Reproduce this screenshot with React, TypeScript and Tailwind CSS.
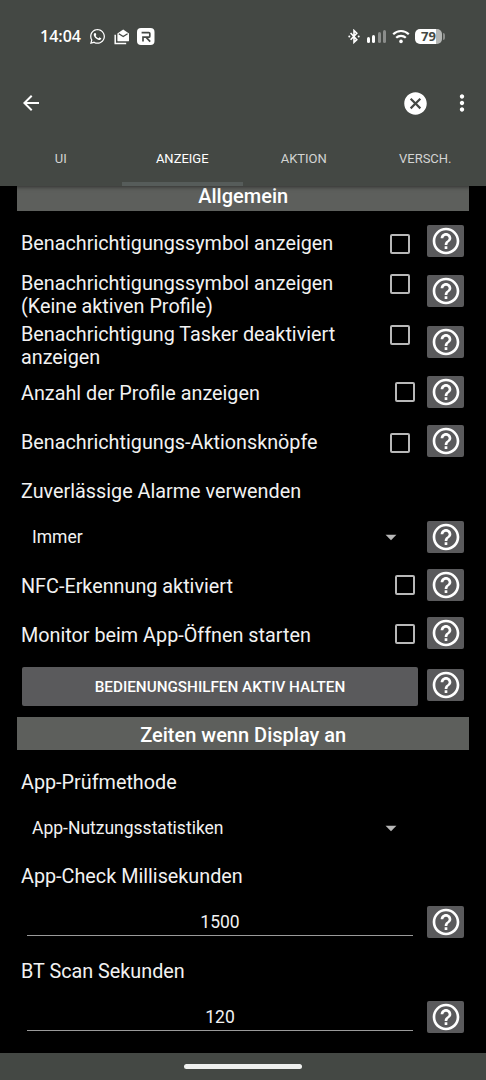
import type { ReactNode } from "react";
import clsx from "clsx";
import {
  MdArrowBack,
  MdArrowDropDown,
  MdCancel,
  MdHelpOutline,
  MdMoreVert,
} from "react-icons/md";
import { FaWhatsapp } from "react-icons/fa";

const tabs = ["UI", "ANZEIGE", "AKTION", "VERSCH."];

const StatusBar = () => {
  return (
    <div className="flex h-[72px] items-center justify-between pr-[41px] pl-10 text-white">
      <div className="flex items-center">
        <span className="w-[49px] font-['Open_Sans',sans-serif] text-[16px] leading-none font-semibold whitespace-nowrap">
          14:04
        </span>
        <FaWhatsapp className="size-[17px]" />
        <svg className="mt-px ml-2 size-4" viewBox="0 0 16 16">
          <path
            d="M1.2 5.8v8.7h11"
            fill="none"
            stroke="currentColor"
            strokeWidth="1.5"
          />
          <path
            d="M3.4 4.6 9.2.6 15 4.6v6.8a.9.9 0 0 1-.9.9H4.3a.9.9 0 0 1-.9-.9z"
            fill="currentColor"
          />
          <path
            d="m4.8 4.8 4.4 2.800 4.400-2.800"
            fill="none"
            stroke="#444844"
            strokeWidth="1.3"
          />
        </svg>
        <svg className="mt-px ml-[7px] size-[18px]" viewBox="0 0 18 18">
          <rect width="17.5" height="17" rx="4" fill="currentColor" />
          <path
            d="M4.6 4.600h7.200a1 1 0 0 1 1 1v2.600a1 1 0 0 1-1 1H6v4.400M9 9.200l4.200 4.400"
            fill="none"
            stroke="#444844"
            strokeWidth="1.7"
          />
        </svg>
      </div>
      <div className="flex items-center">
        <svg className="h-[15px] w-3" viewBox="0 0 12 15">
          <path
            d="m2.6 4 6.200 6.600L6 13.300V1.500l2.800 2.700-6.200 6.600"
            fill="none"
            stroke="currentColor"
            strokeWidth="1.6"
          />
          <circle cx="1.3" cy="7.4" r="1" fill="currentColor" />
          <circle cx="10.7" cy="7.4" r="1" fill="currentColor" />
        </svg>
        <div className="ml-[7px] flex h-[13px] items-end gap-[2.5px]">
          <div className="h-[6px] w-[3px] rounded-full bg-white"></div>
          <div className="h-[8px] w-[3px] rounded-full bg-white"></div>
          <div className="h-[11px] w-[3px] rounded-full bg-[#8b8d8b]"></div>
          <div className="h-[13px] w-[3px] rounded-full bg-[#8b8d8b]"></div>
        </div>
        <svg className="ml-1.5 h-[15px] w-[18px]" viewBox="0 0 18 15">
          <path
            d="M1.2 5.200c4.400-4.300 11.200-4.300 15.600 0M4.200 8.800c2.700-2.700 6.900-2.700 9.600 0"
            fill="none"
            stroke="currentColor"
            strokeWidth="2.2"
          />
          <circle cx="9" cy="12.4" r="1.8" fill="currentColor" />
        </svg>
        <div className="ml-[5px] flex items-center">
          <div className="flex h-[15px] w-[27px] items-center justify-center rounded-[5px] bg-linear-to-r from-white from-78% to-[#b4b6b4] to-78% pt-px font-['Open_Sans',sans-serif] text-[13px] leading-none font-bold text-[#444844]">
            79
          </div>
          <div className="ml-px h-[7px] w-[2px] rounded-r-full bg-[#8b8d8b]"></div>
        </div>
      </div>
    </div>
  );
};

const Header = () => {
  return (
    <header className="relative z-10 h-[186px] bg-[#444844] shadow-[0_1px_4px_rgba(0,0,0,0.5)]">
      <StatusBar />
      <div className="flex h-[62px] items-center pr-[11px] pl-[19px] text-white">
        <MdArrowBack className="size-6" />
        <MdCancel className="mr-[20px] ml-auto size-[27px]" />
        <MdMoreVert className="size-[26px]" />
      </div>
      <nav className="flex h-[52px]">
        {tabs.map((tab) => (
          <div
            key={tab}
            className={clsx(
              "flex flex-1 items-center justify-center border-b-4 pt-[1px] text-[13px]",
              tab === "ANZEIGE"
                ? "border-[#565c5a] text-white"
                : "border-transparent text-[#d3d4d3]",
            )}
          >
            {tab}
          </div>
        ))}
      </nav>
    </header>
  );
};

const Section = ({ children }: { children: ReactNode }) => {
  return (
    <h2 className="mr-[17px] ml-[17.4px] flex h-[33px] items-center justify-center bg-[#5d5f5c] pt-[2px] text-[20px] font-medium text-white">
      {children}
    </h2>
  );
};

const Help = ({ className }: { className: string }) => {
  return (
    <button
      className={clsx(
        "flex h-8 w-[37px] shrink-0 items-center justify-center rounded-[2px] bg-[#5a5a5c] text-white",
        className,
      )}
    >
      <MdHelpOutline className="size-8" />
    </button>
  );
};

const Label = ({
  className,
  children,
}: {
  className: string;
  children: ReactNode;
}) => {
  return (
    <span
      className={clsx(
        "block text-[19.8px] leading-[23px] whitespace-nowrap",
        className,
      )}
    >
      {children}
    </span>
  );
};

const Row = ({
  className,
  children,
}: {
  className: string;
  children: ReactNode;
}) => {
  return (
    <div className={clsx("flex items-start pr-[22px] pl-[21px]", className)}>
      {children}
    </div>
  );
};

const Check = ({ className }: { className: string }) => {
  return (
    <div
      className={clsx(
        "ml-auto size-5 shrink-0 rounded-[2px] border-2 border-[#b8b8b8]",
        className,
      )}
    ></div>
  );
};

const Select = ({ value }: { value: string }) => {
  return (
    <div className="flex h-[43px] w-[383px] items-center justify-between pl-[11px] text-[17.5px]">
      {value}
      <MdArrowDropDown className="mb-px size-[26px] text-[#b8b8b8]" />
    </div>
  );
};

const NumberField = ({ value }: { value: string }) => {
  return (
    <div className="ml-[6px] flex h-9 w-[386px] items-center justify-center border-b-[1.5px] border-[#9a9a9a] pt-[9px] text-[17.5px]">
      {value}
    </div>
  );
};

const App = () => {
  return (
    <div className="flex h-[1080px] w-[486px] flex-col overflow-hidden bg-black font-[Roboto,sans-serif] text-[#f2f2f2]">
      <Header />
      <main className="-mt-2 flex-1">
        <Section>Allgemein</Section>
        <Row className="h-[57px]">
          <Label className="mt-[21px]">Benachrichtigungssymbol anzeigen</Label>
          <Check className="mt-[23px]" />
          <Help className="mt-[14px] ml-[17px]" />
        </Row>
        <Row className="h-[51px]">
          <Label className="mt-[4px]">
            Benachrichtigungssymbol anzeigen
            <br />
            (Keine aktiven Profile)
          </Label>
          <Check className="mt-[6px]" />
          <Help className="mt-[7px] ml-[17px]" />
        </Row>
        <Row className="h-[51px]">
          <Label className="mt-[4px]">
            Benachrichtigung Tasker deaktiviert
            <br />
            anzeigen
          </Label>
          <Check className="mt-[6px]" />
          <Help className="mt-[7px] ml-[17px]" />
        </Row>
        <Row className="h-[49px]">
          <Label className="mt-[12px]">Anzahl der Profile anzeigen</Label>
          <Check className="mt-[12px]" />
          <Help className="mt-[6px] ml-[12px]" />
        </Row>
        <Row className="h-[49px]">
          <Label className="mt-[12px]">Benachrichtigungs-Aktionsknöpfe</Label>
          <Check className="mt-[14px]" />
          <Help className="mt-[6px] ml-[17px]" />
        </Row>
        <Row className="h-12">
          <Label className="mt-[12px]">Zuverlässige Alarme verwenden</Label>
        </Row>
        <Row className="h-[47px]">
          <Select value="Immer" />
          <Help className="mt-[5px] ml-auto" />
        </Row>
        <Row className="h-[49px]">
          <Label className="mt-[12px]">NFC-Erkennung aktiviert</Label>
          <Check className="mt-[12px]" />
          <Help className="mt-[6px] ml-[12px]" />
        </Row>
        <Row className="h-[49px]">
          <Label className="mt-[12px]">Monitor beim App-Öffnen starten</Label>
          <Check className="mt-[12px]" />
          <Help className="mt-[5px] ml-[12px]" />
        </Row>
        <Row className="h-14">
          <button className="mt-[6px] ml-px h-[39px] w-[396px] rounded-[2px] bg-[#5a5a5c] pt-px text-[15.25px] font-medium text-white">
            BEDIENUNGSHILFEN AKTIV HALTEN
          </button>
          <Help className="mt-[8px] ml-auto" />
        </Row>
        <Section>Zeiten wenn Display an</Section>
        <Row className="h-[57px]">
          <Label className="mt-[21px]">App-Prüfmethode</Label>
        </Row>
        <Row className="h-[45px]">
          <Select value="App-Nutzungsstatistiken" />
        </Row>
        <Row className="h-12">
          <Label className="mt-[13px]">App-Check Millisekunden</Label>
        </Row>
        <Row className="h-[47px]">
          <NumberField value="1500" />
          <Help className="mt-[6px] ml-auto" />
        </Row>
        <Row className="h-12">
          <Label className="mt-[13px]">BT Scan Sekunden</Label>
        </Row>
        <Row className="h-[58px]">
          <NumberField value="120" />
          <Help className="mt-[6px] ml-auto" />
        </Row>
      </main>
      <footer className="flex h-[27px] items-center justify-center bg-[#444844]">
        <div className="h-[5px] w-[118px] rounded-full bg-[#f0f1f0]"></div>
      </footer>
    </div>
  );
};

export default App;
